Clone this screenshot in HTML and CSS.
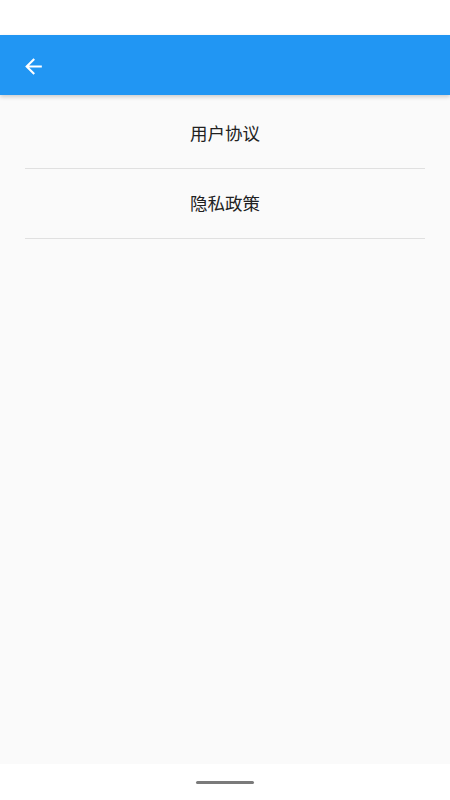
FILE: index.html
```html
<!DOCTYPE html>
<html lang="zh-CN">
<head>
<meta charset="utf-8">
<title>协议</title>
<link rel="stylesheet" href="styles.css">
</head>
<body>
<div class="screen">
  <div class="status-bar"></div>
  <header class="app-bar">
    <button class="back" aria-label="返回">
      <svg viewBox="0 0 24 24" width="25" height="25"><path fill="#fff" d="M20 11H7.83l5.59-5.59L12 4l-8 8 8 8 1.41-1.41L7.83 13H20v-2z"/></svg>
    </button>
  </header>
  <main class="content">
    <ul class="menu">
      <li class="menu-item">用户协议</li>
      <li class="menu-item">隐私政策</li>
    </ul>
  </main>
  <div class="nav-bar"><span class="handle"></span></div>
</div>
</body>
</html>
```
FILE: styles.css
```css
html, body {
  margin: 0;
  padding: 0;
}
body {
  font-family: "Noto Sans CJK SC", "Noto Sans", Roboto, sans-serif;
  background: #fff;
}
.screen {
  width: 450px;
  height: 800px;
  display: flex;
  flex-direction: column;
}
.status-bar {
  height: 35px;
  background: #fff;
}
.app-bar {
  height: 60px;
  background: #2196f3;
  display: flex;
  align-items: center;
  padding-left: 21px;
  box-shadow: 0 2px 4px rgba(0, 0, 0, 0.18);
  position: relative;
  z-index: 1;
}
.back {
  border: 0;
  background: none;
  padding: 0;
  margin: 0;
  width: 25px;
  height: 25px;
  display: flex;
  margin-top: 3px;
}
.content {
  flex: 1;
  background: #fafafa;
}
.menu {
  list-style: none;
  margin: 0 25px;
  padding: 4px 0 0;
}
.menu-item {
  padding: 22px 0 23px;
  font-size: 17.5px;
  line-height: 24px;
  color: #212121;
  text-align: center;
  border-bottom: 1px solid #e0e0e0;
}
.nav-bar {
  height: 36px;
  background: #fff;
  display: flex;
  justify-content: center;
  align-items: center;
}
.handle {
  width: 58px;
  height: 3px;
  border-radius: 2px;
  background: #7a7a7a;
}
```
